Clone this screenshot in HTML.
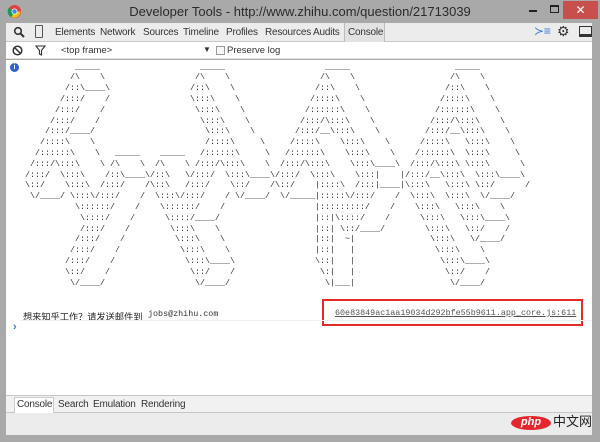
<!DOCTYPE html>
<html><head><meta charset="utf-8"><style>
*{margin:0;padding:0;box-sizing:border-box}
body{width:600px;height:442px;overflow:hidden;background:#a9a9a9;font-family:"Liberation Sans","Noto Sans CJK SC",sans-serif;position:relative}
.abs{position:absolute}
#title{left:0;top:0;width:600px;height:23px;background:#a9a9a9;color:#2b2b2b;font-size:13px;line-height:23px;text-align:center}
#tool{left:6px;top:23px;width:586px;height:19px;background:#ececec;border-bottom:1px solid #c8c8c8;font-size:10px;letter-spacing:-0.2px;color:#333}
#tool span{position:absolute;top:4px}
#filter{left:6px;top:42px;width:586px;height:17px;background:#fff;border-bottom:1px solid #e2e2e2;font-size:9.5px;color:#333}
#main{left:6px;top:60px;width:586px;height:335px;background:#fff}
#art{left:25px;top:61.6px;font-family:"Liberation Mono",monospace;font-size:8.33px;line-height:10.8px;color:#333}
#art div{position:absolute;left:0;height:10.8px;width:600px}
#art b{position:absolute;top:0;font-weight:normal;white-space:pre}
#drawer{left:6px;top:395px;width:586px;height:18px;background:#f1f1f1;border-top:1px solid #c6c6c6;border-bottom:1px solid #c6c6c6;font-size:10px;letter-spacing:-0.2px;color:#333}
#drawer span{position:absolute;top:3px}
#bottom{left:6px;top:413px;width:586px;height:22px;background:#ececec}
</style></head><body>
<div id="title" class="abs">Developer Tools - http://www.zhihu.com/question/21713039</div>
<svg class="abs" style="left:7px;top:4px" width="15" height="15" viewBox="0 0 16 16"><circle cx="8" cy="8" r="7" fill="#db4437"/><path d="M8 8 L14.5 8 A7 7 0 0 1 4.5 14 Z" fill="#f4c20d"/><path d="M8 8 L4.5 14 A7 7 0 0 1 1.5 4.5 Z" fill="#0f9d58"/><circle cx="8" cy="8" r="3.2" fill="#fff"/><circle cx="8" cy="8" r="2.4" fill="#4285f4"/></svg>
<div class="abs" style="left:529px;top:10px;width:8px;height:2px;background:#222"></div>
<div class="abs" style="left:550px;top:5px;width:9px;height:8px;border:1px solid #222;border-top-width:2px"></div>
<div class="abs" style="left:563px;top:1px;width:35px;height:18px;background:#c7504c;color:#fff;font-size:12px;text-align:center;line-height:18px">✕</div>
<div id="tool" class="abs">
<svg class="abs" style="left:7px;top:3px" width="12" height="12" viewBox="0 0 12 12"><circle cx="5" cy="5" r="3.3" fill="none" stroke="#333" stroke-width="1.6"/><path d="M7.5 7.5 L11 11" stroke="#333" stroke-width="2"/></svg>
<div class="abs" style="left:29px;top:2px;width:8px;height:13px;border:1px solid #555;border-radius:1px"></div>
<span style="left:49px">Elements</span><span style="left:94px">Network</span><span style="left:137px">Sources</span><span style="left:177px">Timeline</span><span style="left:220px">Profiles</span><span style="left:259px">Resources</span><span style="left:307px">Audits</span>
<div class="abs" style="left:338px;top:0;width:41px;height:19px;background:#e2e2e2;border-left:1px solid #bbb;border-right:1px solid #bbb"></div>
<span style="left:342px">Console</span>
<span style="left:528px;top:1px;color:#3b7be0;font-size:12px">≻≡</span>
<span style="left:551px;top:0;font-size:14px">⚙</span>
<div class="abs" style="left:573px;top:3px;width:13px;height:11px;border:1px solid #333;border-bottom:3px solid #333"></div>
</div>
<div id="filter" class="abs">
<svg class="abs" style="left:6px;top:3px" width="11" height="11" viewBox="0 0 11 11"><circle cx="5.5" cy="5.5" r="4.3" fill="none" stroke="#333" stroke-width="1.5"/><path d="M2.5 2.5 L8.5 8.5" stroke="#333" stroke-width="1.5"/></svg>
<svg class="abs" style="left:29px;top:3px" width="11" height="11" viewBox="0 0 11 11"><path d="M1 1 H10 L6.5 5.5 V10 L4.5 9 V5.5 Z" fill="none" stroke="#333" stroke-width="1.1"/></svg>
<span class="abs" style="left:55px;top:3px">&lt;top frame&gt;</span>
<span class="abs" style="left:197px;top:3px;font-size:8px">▼</span>
<div class="abs" style="left:210px;top:4px;width:9px;height:9px;border:1px solid #999;background:#f6f6f6"></div>
<span class="abs" style="left:221px;top:3px">Preserve log</span>
</div>
<div id="main" class="abs"></div>
<div class="abs" style="left:10px;top:63px;width:9px;height:9px;border-radius:50%;background:#2f5fd0;color:#fff;font-size:7px;line-height:9px;text-align:center;font-weight:bold">i</div>
<div id="art" class="abs">
<div style="top:0"><b style="left:50px">_____</b><b style="left:175px">_____</b><b style="left:300px">_____</b><b style="left:430px">_____</b></div>
<div style="top:10.8px"><b style="left:45px">/\    \</b><b style="left:170px">/\    \</b><b style="left:295px">/\    \</b><b style="left:425px">/\    \</b></div>
<div style="top:21.6px"><b style="left:40px">/::\____\</b><b style="left:165px">/::\    \</b><b style="left:290px">/::\    \</b><b style="left:420px">/::\    \</b></div>
<div style="top:32.4px"><b style="left:35px">/:::/    /</b><b style="left:165px">\:::\    \</b><b style="left:285px">/::::\    \</b><b style="left:415px">/::::\    \</b></div>
<div style="top:43.2px"><b style="left:30px">/:::/    /</b><b style="left:170px">\:::\    \</b><b style="left:280px">/::::::\    \</b><b style="left:410px">/::::::\    \</b></div>
<div style="top:54px"><b style="left:25px">/:::/    /</b><b style="left:175px">\:::\    \</b><b style="left:275px">/:::/\:::\    \</b><b style="left:405px">/:::/\:::\    \</b></div>
<div style="top:64.8px"><b style="left:20px">/:::/____/</b><b style="left:180px">\:::\    \</b><b style="left:270px">/:::/__\:::\    \</b><b style="left:400px">/:::/__\:::\    \</b></div>
<div style="top:75.6px"><b style="left:15px">/::::\    \</b><b style="left:180px">/::::\     \</b><b style="left:265px">/::::\    \:::\    \</b><b style="left:395px">/::::\</b><b style="left:440px">\:::\</b><b style="left:485px">\</b></div>
<div style="top:86.4px"><b style="left:10px">/::::::\    \</b><b style="left:90px">_____</b><b style="left:135px">_____</b><b style="left:175px">/::::::\     \</b><b style="left:260px">/::::::\    \:::\    \</b><b style="left:390px">/::::::\</b><b style="left:440px">\:::\</b><b style="left:490px">\</b></div>
<div style="top:97.2px"><b style="left:5px">/:::/\:::\    \</b><b style="left:85px">/\    \</b><b style="left:130px">/\    \</b><b style="left:170px">/:::/\:::\    \</b><b style="left:255px">/:::/\:::\    \:::\____\</b><b style="left:385px">/:::/\:::\</b><b style="left:440px">\:::\</b><b style="left:495px">\</b></div>
<div style="top:108px"><b style="left:0">/:::/  \:::\</b><b style="left:80px">/::\____\</b><b style="left:125px">/::\   \</b><b style="left:165px">/:::/  \:::\____\</b><b style="left:250px">/:::/  \:::\    \:::|    |</b><b style="left:380px">/:::/__\:::\</b><b style="left:450px">\:::\____\</b></div>
<div style="top:118.8px"><b style="left:0">\::/</b><b style="left:40px">\:::\</b><b style="left:75px">/:::/</b><b style="left:120px">/\::\</b><b style="left:160px">/:::/</b><b style="left:205px">\::/</b><b style="left:245px">/\::/</b><b style="left:290px">|::::\</b><b style="left:330px">/:::|____|</b><b style="left:380px">\:::\</b><b style="left:420px">\:::\</b><b style="left:450px">\::/</b><b style="left:500px">/</b></div>
<div style="top:129.6px"><b style="left:5px">\/____/</b><b style="left:45px">\:::\/:::/</b><b style="left:115px">/</b><b style="left:130px">\:::\/:::/</b><b style="left:200px">/</b><b style="left:210px">\/____/</b><b style="left:255px">\/_____</b><b style="left:290px">|:::::\/:::/</b><b style="left:370px">/</b><b style="left:385px">\:::\</b><b style="left:420px">\:::\</b><b style="left:455px">\/____/</b></div>
<div style="top:140.4px"><b style="left:50px">\::::::/</b><b style="left:110px">/</b><b style="left:135px">\::::::/</b><b style="left:195px">/</b><b style="left:290px">|:::::::::/</b><b style="left:365px">/</b><b style="left:390px">\:::\</b><b style="left:430px">\:::\</b><b style="left:475px">\</b></div>
<div style="top:151.2px"><b style="left:55px">\::::/</b><b style="left:105px">/</b><b style="left:140px">\::::/____/</b><b style="left:290px">|::|\::::/</b><b style="left:360px">/</b><b style="left:395px">\:::\</b><b style="left:435px">\:::\____\</b></div>
<div style="top:162px"><b style="left:55px">/:::/</b><b style="left:100px">/</b><b style="left:145px">\:::\</b><b style="left:190px">\</b><b style="left:290px">|::| \::/____/</b><b style="left:400px">\:::\</b><b style="left:440px">\::/</b><b style="left:480px">/</b></div>
<div style="top:172.8px"><b style="left:50px">/:::/</b><b style="left:95px">/</b><b style="left:150px">\:::\</b><b style="left:195px">\</b><b style="left:290px">|::|  ~|</b><b style="left:405px">\:::\</b><b style="left:445px">\/____/</b></div>
<div style="top:183.6px"><b style="left:45px">/:::/</b><b style="left:90px">/</b><b style="left:155px">\:::\</b><b style="left:200px">\</b><b style="left:290px">|::|   |</b><b style="left:410px">\:::\</b><b style="left:455px">\</b></div>
<div style="top:194.4px"><b style="left:40px">/:::/</b><b style="left:85px">/</b><b style="left:160px">\:::\____\</b><b style="left:290px">\::|   |</b><b style="left:415px">\:::\____\</b></div>
<div style="top:205.2px"><b style="left:40px">\::/</b><b style="left:80px">/</b><b style="left:165px">\::/</b><b style="left:205px">/</b><b style="left:295px">\:|   |</b><b style="left:420px">\::/</b><b style="left:460px">/</b></div>
<div style="top:216px"><b style="left:45px">\/____/</b><b style="left:170px">\/____/</b><b style="left:300px">\|___|</b><b style="left:425px">\/____/</b></div>
</div>
<div class="abs" style="left:23px;top:309px;font-size:9.2px;color:#222;font-family:'Liberation Sans','Noto Sans CJK SC',sans-serif;white-space:nowrap">想来知乎工作？请发送邮件到</div>
<div class="abs" style="left:148px;top:309px;font-size:8.4px;color:#333;font-family:'Liberation Mono',monospace">jobs@zhihu.com</div>
<div class="abs" style="left:322px;top:299px;width:261px;height:27px;border:2px solid #e52a2a"></div>
<div class="abs" style="left:335px;top:308px;font-size:8.4px;color:#555;font-family:'Liberation Mono',monospace;text-decoration:underline">60e83849ac1aa19034d292bfe55b9611.app_core.js:611</div>
<div class="abs" style="left:20px;top:320px;width:572px;height:1px;background:#f0f0f0"></div>
<div class="abs" style="left:13px;top:321px;font-size:11px;color:#3b7be0;font-weight:bold">›</div>
<div id="drawer" class="abs">
<div class="abs" style="left:8px;top:1px;width:40px;height:16px;background:#fff;border:1px solid #ccc;border-bottom:none"></div>
<span style="left:11px">Console</span><span style="left:52px">Search</span><span style="left:87px">Emulation</span><span style="left:135px">Rendering</span>
</div>
<div id="bottom" class="abs"></div>
<div class="abs" style="left:511px;top:416px;width:40px;height:14px;border-radius:50%;background:#e3262b;color:#fff;font-size:11px;line-height:13px;text-align:center;font-style:italic;font-weight:bold">php</div>
<div class="abs" style="left:553px;top:414px;font-size:13px;color:#222;font-family:'Liberation Sans','Noto Sans CJK SC',sans-serif;line-height:16px">中文网</div>
</body></html>
